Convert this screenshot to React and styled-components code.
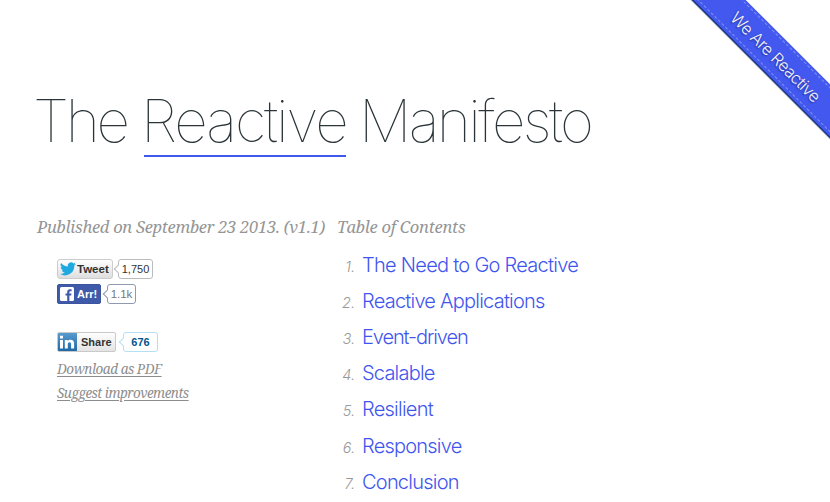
import React from "react";
import styled, { createGlobalStyle } from "styled-components";

const sans = 'Inter, "Liberation Sans", sans-serif';
const serif = '"Noto Serif", "DejaVu Serif", serif';
const button = '"Liberation Sans", Arial, sans-serif';

const GlobalStyle = createGlobalStyle`
  *, *::before, *::after { box-sizing: border-box; }
  html, body { margin: 0; background: #fff; }
  body { overflow: hidden; }
`;

const Page = styled.main`
  position: relative;
  width: 830px;
  height: 502px;
  padding: 87px 36px 0 37px;
  overflow: hidden;
  font-family: ${sans};
  background: #fff;
`;

const Ribbon = styled.a`
  position: absolute;
  top: 38px;
  left: 661px;
  width: 230px;
  height: 37px;
  display: flex;
  align-items: center;
  justify-content: center;
  transform: rotate(45deg);
  background: #4358ee;
  box-shadow: 0 1.5px 1px #0d2a6b;
  color: #f2f4ff;
  font-size: 16.5px;
  font-weight: 300;
  letter-spacing: -0.45px;
  text-decoration: none;
  text-shadow: 0 1px 2px rgba(0, 0, 60, 0.6);

  &::before {
    content: "";
    position: absolute;
    inset: 2px -2px 3px;
    border: 1px dashed #8391f5;
  }
`;

const Title = styled.h1`
  display: flex;
  margin: 0;
  height: 70px;
  line-height: 68px;
  color: #2b3539;
  font-size: 58.5px;
  font-weight: 100;
  white-space: nowrap;
`;

const Word = styled.span`
  width: ${(p) => p.$width}px;
  letter-spacing: ${(p) => p.$spacing}px;
  text-indent: ${(p) => p.$indent}px;
  margin-right: 18px;
  height: 70px;
  border-bottom: ${(p) => (p.$underlined ? "2px solid #4158ef" : "0")};
`;

const Columns = styled.div`
  display: grid;
  grid-template-columns: 300px 1fr;
  margin-top: 59px;
`;

const Label = styled.h2`
  margin: 0;
  height: 22px;
  color: #959595;
  font: italic 400 16.5px/22px ${serif};
  letter-spacing: ${(p) => p.$spacing}px;
  white-space: nowrap;
`;

const Social = styled.ul`
  display: flex;
  flex-direction: column;
  align-items: flex-start;
  margin: 21px 0 0 20px;
  padding: 0;
  list-style: none;
`;

const ShareRow = styled.li`
  display: flex;
  height: 20px;
  margin-bottom: ${(p) => p.$gap}px;
`;

const tones = {
  twitter: "border: 1px solid #ccc; border-radius: 3px; color: #333; background: linear-gradient(#fff, #dedede);",
  facebook: "border: 1px solid #3d559f; border-radius: 2px; color: #fff; background: #3f5aa9;",
  linkedin: "border: 1px solid #c9c9c9; border-radius: 2px; color: #333; background: linear-gradient(#fefefe, #e4e4e4);",
};

const ShareButton = styled.button`
  display: flex;
  align-items: center;
  width: ${(p) => p.$width}px;
  height: 20px;
  padding: 0;
  overflow: hidden;
  ${(p) => tones[p.$tone]}
  font: 700 ${(p) => p.$size || 11}px/18px ${button};
  white-space: nowrap;

  svg { flex: none; margin: ${(p) => p.$iconMargin}; }
`;

const Count = styled.span`
  position: relative;
  width: ${(p) => p.$width}px;
  height: 20px;
  margin-left: ${(p) => p.$gap}px;
  border: 1px solid ${(p) => p.$border};
  border-radius: 3px;
  color: ${(p) => p.$color};
  background: #fff;
  font: ${(p) => (p.$bold ? 700 : 400)} ${(p) => p.$size || 11}px/19px ${button};
  text-align: center;

  &::before {
    content: "";
    position: absolute;
    top: 6px;
    left: -4px;
    width: 6px;
    height: 6px;
    transform: rotate(45deg);
    border: solid ${(p) => p.$border};
    border-width: 0 0 1px 1px;
    background: #fff;
  }
`;

const ActionItem = styled.li`
  height: 24px;
  line-height: 24px;
`;

const ActionLink = styled.a`
  color: #8d8d8d;
  font: italic 400 13.5px/24px ${serif};
  letter-spacing: ${(p) => p.$spacing}px;
  text-decoration: underline;
  text-underline-offset: 2px;
  white-space: nowrap;
`;

const Contents = styled.ol`
  margin: 15px 0 0;
  padding: 0;
  list-style: none;
`;

const Entry = styled.li`
  display: flex;
  align-items: baseline;
  height: 36.11px;
  line-height: 24px;
`;

const Index = styled.span`
  width: 18px;
  margin-right: 7px;
  color: #999;
  font-size: 14.5px;
  font-style: italic;
  font-weight: 300;
  text-align: right;
`;

const EntryLink = styled.a`
  color: #3f56ee;
  font-size: 20px;
  font-weight: 300;
  letter-spacing: ${(p) => p.$spacing}px;
  text-decoration: none;
  white-space: nowrap;
`;

const TwitterBird = () => (
  <svg width="16" height="14" viewBox="0 0 24 20">
    <path fill="#20a8e0" d="M24 2.4a9.8 9.8 0 0 1-2.8.8A4.9 4.9 0 0 0 23.3.4a9.8 9.8 0 0 1-3.1 1.2 4.9 4.9 0 0 0-8.4 4.5A14 14 0 0 1 1.7.9a4.9 4.9 0 0 0 1.5 6.6 4.9 4.9 0 0 1-2.2-.6 4.9 4.9 0 0 0 3.9 4.9 4.9 4.9 0 0 1-2.2.1 4.9 4.9 0 0 0 4.6 3.4A9.9 9.9 0 0 1 0 17.3a14 14 0 0 0 21.5-12.4A10 10 0 0 0 24 2.4z" />
  </svg>
);

const FacebookMark = () => (
  <svg width="14" height="14" viewBox="0 0 14 14">
    <rect width="14" height="14" rx="1.5" fill="#fff" />
    <path fill="#3f5aa9" d="M7.2 14V8.5H5.5v-2h1.7V5c0-1.9 1.1-2.8 2.8-2.8h1.6v2h-1.1c-.8 0-1.1.3-1.1 1v1.3h2.1l-.3 2H9.4V14z" />
  </svg>
);

const LinkedInMark = () => (
  <svg width="20" height="20" viewBox="0 0 20 20">
    <defs>
      <linearGradient id="linkedin-face" x1="0" y1="0" x2="0" y2="1">
        <stop offset="0" stopColor="#5a9fd0" />
        <stop offset="1" stopColor="#1d65a4" />
      </linearGradient>
    </defs>
    <rect width="20" height="20" rx="2" fill="url(#linkedin-face)" />
    <path fill="#fff" d="M3 8h3v8.500H3zM3 3.800h3v2.800H3zM7.800 8h2.900v1.200c.6-.9 1.500-1.400 2.900-1.400 2.400 0 3.500 1.400 3.500 3.700v5h-3v-4.400c0-1.200-.4-1.900-1.500-1.900s-1.800.8-1.800 1.900v4.400h-3z" />
  </svg>
);

const entries = [
  ["The Need to Go Reactive", -0.72],
  ["Reactive Applications", -0.77],
  ["Event-driven", -1.1],
  ["Scalable", -0.8],
  ["Resilient", -0.75],
  ["Responsive", -0.78],
  ["Conclusion", -0.77],
];

export default function App() {
  return (
    <Page>
      <GlobalStyle />
      <Ribbon>We Are Reactive</Ribbon>
      <Title>
        <Word $width={89} $spacing={-3.4} $indent={-4}>The</Word>
        <Word $width={202} $spacing={-2.1} $indent={-3} $underlined>Reactive</Word>
        <Word $width={240} $spacing={-2.65} $indent={-5}>Manifesto</Word>
      </Title>
      <Columns>
        <section>
          <Label $spacing={-0.28}>Published on September 23 2013. (v1.1)</Label>
          <Social>
            <ShareRow $gap={5}>
              <ShareButton $tone="twitter" $width={56} $size={11.5} $iconMargin="0 1px 0 2px"><TwitterBird />Tweet</ShareButton>
              <Count $width={35} $gap={5} $border="#bbb" $color="#333">1,750</Count>
            </ShareRow>
            <ShareRow $gap={28}>
              <ShareButton $tone="facebook" $width={44} $iconMargin="0 3px 0 2px"><FacebookMark />Arr!</ShareButton>
              <Count $width={29} $gap={6} $border="#8f99b0" $color="#777" $size={11.5}>1.1k</Count>
            </ShareRow>
            <ShareRow $gap={4}>
              <ShareButton $tone="linkedin" $width={59} $iconMargin="0 4px 0 -1px"><LinkedInMark />Share</ShareButton>
              <Count $width={35} $gap={7} $border="#b5e0f4" $color="#04558b" $bold>676</Count>
            </ShareRow>
            <ActionItem><ActionLink href="#" $spacing={-0.45}>Download as PDF</ActionLink></ActionItem>
            <ActionItem><ActionLink href="#" $spacing={-0.5}>Suggest improvements</ActionLink></ActionItem>
          </Social>
        </section>
        <nav>
          <Label $spacing={-0.24}>Table of Contents</Label>
          <Contents>
            {entries.map(([label, spacing], i) => (
              <Entry key={label}>
                <Index>{i + 1}.</Index>
                <EntryLink $spacing={spacing}>{label}</EntryLink>
              </Entry>
            ))}
          </Contents>
        </nav>
      </Columns>
    </Page>
  );
}
